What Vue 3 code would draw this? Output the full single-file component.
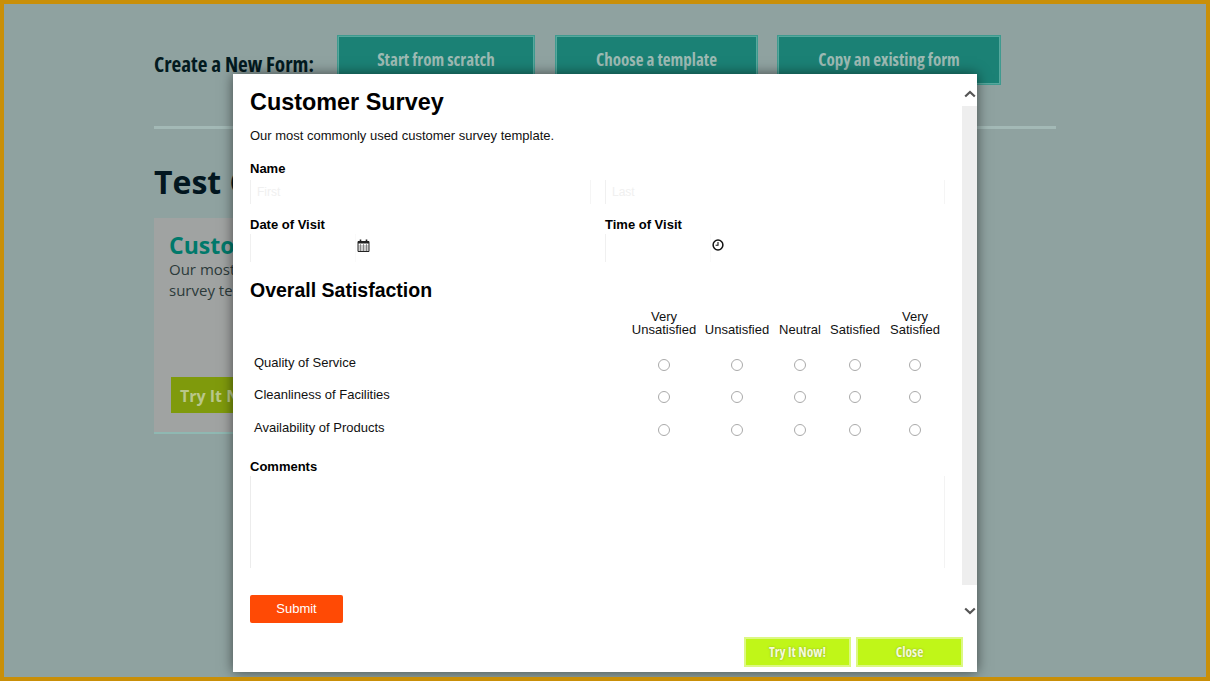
<template>
  <div class="frame">
    <div class="page">
      <div class="create-row">
        <h2 class="create-title">Create a New Form:</h2>
        <a v-for="b in createButtons" :key="b.text" class="create-btn" :class="b.cls">{{ b.text }}</a>
      </div>
      <div class="divider"></div>
      <h1 class="test-title">Test Customer Forms</h1>
      <div class="card">
        <h3 class="card-title">Customer Survey</h3>
        <p class="card-text">Our most commonly used customer survey template.</p>
        <a class="card-btn">Try It Now!</a>
      </div>
    </div>

    <div class="modal">
      <div class="modal-scroll">
        <div class="form">
          <h1 class="form-title">Customer Survey</h1>
          <p class="form-desc">Our most commonly used customer survey template.</p>

          <label class="field-label">Name</label>
          <div class="two-col name-row">
            <input class="text-input" placeholder="First" />
            <input class="text-input" placeholder="Last" />
          </div>

          <div class="two-col date-row">
            <div>
              <label class="field-label">Date of Visit</label>
              <div class="picker">
                <input class="text-input short" />
                <svg class="picker-icon" width="13" height="13" viewBox="0 0 13 13">
                  <path d="M1 2.5h11v10H1z" fill="none" stroke="#222" stroke-width="1" />
                  <path d="M1 2.5h11v2H1z" fill="#222" />
                  <path d="M1 7h11M1 9h11M1 11h11M3.5 5v7M6.5 5v7M9.5 5v7" stroke="#555" stroke-width=".6" />
                  <path d="M3.5 .5v3M9.5 .5v3" stroke="#222" stroke-width="1.6" />
                </svg>
              </div>
            </div>
            <div>
              <label class="field-label">Time of Visit</label>
              <div class="picker">
                <input class="text-input short" />
                <svg class="picker-icon" width="12" height="12" viewBox="0 0 12 12">
                  <circle cx="6" cy="6" r="4.9" fill="none" stroke="#111" stroke-width="1.5" />
                  <path d="M6 3v3.3H3.6" fill="none" stroke="#111" stroke-width="1.1" />
                </svg>
              </div>
            </div>
          </div>

          <h2 class="section-title">Overall Satisfaction</h2>

          <div class="matrix">
            <div class="matrix-head"></div>
            <div v-for="c in scale" :key="c" class="matrix-head">{{ c }}</div>
            <template v-for="q in questions" :key="q">
              <div class="matrix-label">{{ q }}</div>
              <div v-for="c in scale" :key="c" class="matrix-cell">
                <input class="radio" type="radio" :name="q" />
              </div>
            </template>
          </div>

          <label class="field-label comments-label">Comments</label>
          <textarea class="comments"></textarea>

          <button class="submit">Submit</button>
        </div>

        <div class="scrollbar">
          <svg width="12" height="8" viewBox="0 0 12 8"><path d="M1.2 6.5 6 2l4.8 4.5" fill="none" stroke="#555" stroke-width="2.2" /></svg>
          <div class="track"></div>
          <svg width="12" height="8" viewBox="0 0 12 8"><path d="M1.2 1.5 6 6l4.8-4.5" fill="none" stroke="#555" stroke-width="2.2" /></svg>
        </div>
      </div>

      <div class="modal-footer">
        <button class="footer-btn">Try It Now!</button>
        <button class="footer-btn">Close</button>
      </div>
    </div>
  </div>
</template>

<script setup>
const createButtons = [
  { text: 'Start from scratch', cls: 'w1' },
  { text: 'Choose a template', cls: 'w2' },
  { text: 'Copy an existing form', cls: 'w3' }
]

const scale = ['Very Unsatisfied', 'Unsatisfied', 'Neutral', 'Satisfied', 'Very Satisfied']

const questions = ['Quality of Service', 'Cleanliness of Facilities', 'Availability of Products']
</script>

<style>
html,
body {
  margin: 0;
  background: #8fa2a0;
}
</style>

<style scoped>
.frame {
  position: relative;
  box-sizing: border-box;
  width: 1210px;
  height: 681px;
  border: 4px solid #c98f08;
  overflow: hidden;
  background: #8fa2a0;
  font-family: "Open Sans", sans-serif;
}

.page {
  padding: 31px 150px 0;
}

.create-row {
  display: flex;
  align-items: flex-start;
}

.create-title {
  width: 183px;
  margin: 15px 0 0;
  font-size: 21.2px;
  line-height: 27px;
  font-weight: 700;
  font-stretch: 75%;
  color: #031a1f;
  white-space: nowrap;
}

.create-btn {
  box-sizing: border-box;
  height: 50px;
  padding-top: 13px;
  margin-right: 20px;
  border: 1px solid #3f9a8f;
  box-shadow: inset 0 0 0 1px #57a89d;
  background: #1b8175;
  color: #9dbab3;
  font-size: 17px;
  line-height: 22px;
  font-weight: 700;
  font-stretch: 75%;
  text-align: center;
}

.w1 {
  width: 198px;
}

.w2 {
  width: 203px;
  margin-right: 19px;
}

.w3 {
  width: 224px;
}

.divider {
  height: 3px;
  margin-top: 41px;
  background: #a3b9b6;
}

.test-title {
  margin: 31px 0 0;
  font-size: 32px;
  line-height: 44px;
  font-weight: 700;
  color: #02161f;
  white-space: nowrap;
}

.card {
  box-sizing: border-box;
  width: 300px;
  height: 216px;
  margin-top: 14px;
  padding: 13px 15px;
  background: #a0a3a2;
  border-bottom: 2px solid #8fb8b2;
}

.card-title {
  margin: 0;
  font-size: 23px;
  line-height: 28px;
  font-weight: 700;
  color: #00796b;
  white-space: nowrap;
}

.card-text {
  margin: 0;
  width: 270px;
  font-size: 15px;
  line-height: 21px;
  color: #2c3a3a;
}

.card-btn {
  display: block;
  width: 130px;
  height: 36px;
  margin: 76px 0 0 2px;
  padding-left: 9px;
  background: #7f9a0c;
  color: #b9c78a;
  font-size: 16px;
  line-height: 38px;
  font-weight: 700;
}

.modal {
  position: absolute;
  left: 229px;
  top: 70px;
  width: 744px;
  height: 598px;
  background: #fff;
  box-shadow: 0 0 12px rgba(0, 0, 0, 0.55);
  font-family: "Liberation Sans", Arial, sans-serif;
  color: #000;
}

.modal-scroll {
  display: flex;
  height: 548px;
}

.form {
  box-sizing: border-box;
  width: 729px;
  padding: 14px 17px 0;
}

.form-title {
  margin: 0;
  font-size: 23.4px;
  line-height: 28px;
  font-weight: 700;
}

.form-desc {
  margin: 12px 0 0;
  font-size: 13px;
  line-height: 16px;
  color: #111;
}

.field-label {
  display: block;
  margin-top: 17px;
  font-size: 13px;
  line-height: 16px;
  font-weight: 700;
}

.two-col {
  display: grid;
  grid-template-columns: 341px 340px;
  column-gap: 14px;
}

.name-row {
  margin-top: 3px;
}

.date-row {
  margin-top: -4px;
}

.text-input {
  box-sizing: border-box;
  display: block;
  width: 100%;
  height: 24px;
  padding: 0 6px;
  border: 0;
  border-left: 1px solid #f0f0f0;
  border-right: 1px solid #f5f5f5;
  outline: none;
  background: #fff;
  font-family: inherit;
  font-size: 12px;
}

.text-input::placeholder {
  color: #f0f0f0;
}

.picker {
  display: flex;
  align-items: center;
  margin-top: 1px;
}

.text-input.short {
  width: 106px;
  margin-right: 1px;
  height: 28px;
  border-right-color: #fafafa;
}

.picker-icon {
  margin-bottom: 6px;
}

.section-title {
  margin: 15px 0 0;
  font-size: 19.5px;
  line-height: 26px;
  font-weight: 700;
}

.matrix {
  display: grid;
  grid-template-columns: 378px 72px 74px 52px 58px 62px;
  grid-auto-rows: 32.5px;
  grid-template-rows: 45.5px;
  margin-top: 6px;
}

.matrix-head {
  align-self: start;
  display: flex;
  align-items: flex-end;
  justify-content: center;
  height: 27px;
  font-size: 13px;
  line-height: 13px;
  text-align: center;
  color: #111;
}

.matrix-label {
  padding-left: 4px;
  font-size: 13px;
  line-height: 16px;
  color: #111;
}

.matrix-cell {
  display: flex;
  justify-content: center;
  padding-top: 4px;
}

.radio {
  appearance: none;
  box-sizing: border-box;
  width: 12px;
  height: 12px;
  margin: 0;
  border: 1px solid #aaa;
  border-radius: 50%;
  background: #fff;
}

.comments-label {
  margin-top: 6.5px;
}

.comments {
  box-sizing: border-box;
  display: block;
  width: 695px;
  height: 92px;
  margin-top: 1px;
  padding: 4px;
  border: 0;
  border-left: 1px solid #ececec;
  border-right: 1px solid #f3f3f3;
  outline: none;
  resize: none;
}

.submit {
  display: block;
  width: 93px;
  height: 28px;
  margin-top: 27px;
  padding: 0;
  border: 0;
  border-radius: 2px;
  background: #ff4a05;
  color: #fff;
  font-family: inherit;
  font-size: 13px;
}

.scrollbar {
  display: flex;
  flex-direction: column;
  align-items: center;
  width: 15px;
  padding-top: 16px;
}

.track {
  width: 15px;
  height: 479px;
  margin: 8px 0 22px;
  background: #eeeeee;
}

.scrollbar svg {
  flex: none;
}

.modal-footer {
  display: flex;
  justify-content: flex-end;
  gap: 5px;
  padding: 15px 14px 0 0;
}

.footer-btn {
  box-sizing: border-box;
  width: 107px;
  height: 30px;
  padding: 0;
  border: 2px solid #dcf883;
  background: #c0f618;
  color: #f4fbd8;
  font-family: "Open Sans", sans-serif;
  font-size: 13.5px;
  font-weight: 700;
  font-stretch: 75%;
  text-shadow: 0 0 2px rgba(120, 130, 60, 0.7);
}
</style>
